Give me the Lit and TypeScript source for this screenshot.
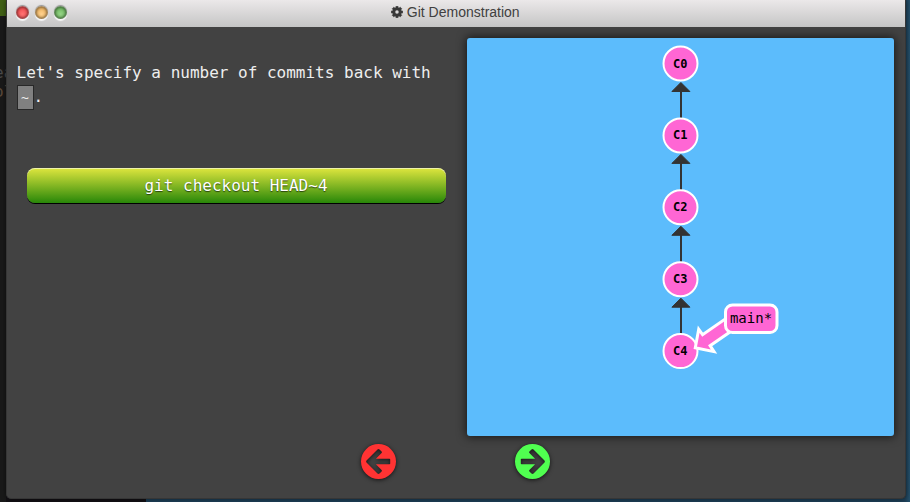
import { LitElement, html, css, svg } from "lit";
import { customElement } from "lit/decorators.js";

const COG =
  "M1152 896q0-106-75-181t-181-75-181 75-75 181 75 181 181 75 181-75 75-181zm512-109v222q0 12-8 23t-20 13l-185 28q-19 54-39 91 35 50 107 138 10 12 10 25t-9 23q-27 37-99 108t-94 71q-12 0-26-9l-138-108q-44 23-91 38-16 136-29 186-7 28-36 28h-222q-14 0-24.5-8.5t-11.5-21.5l-28-184q-49-16-90-37l-141 107q-10 9-25 9-14 0-25-11-126-114-165-168-7-10-7-23 0-12 8-23 15-21 51-66.5t54-70.5q-27-50-41-99l-183-27q-13-2-21-12.5t-8-23.5v-222q0-12 8-23t19-13l186-28q14-46 39-92-40-57-107-138-10-12-10-24 0-10 9-23 26-36 98.5-107.5t94.5-71.5q13 0 26 10l138 107q44-23 91-38 16-136 29-186 7-28 36-28h222q14 0 24.5 8.5t11.5 21.5l28 184q49 16 90 37l142-107q9-9 24-9 13 0 25 10 129 119 165 170 7 8 7 22 0 12-8 23-15 21-51 66.5t-54 70.5q26 50 41 98l183 28q13 2 21 12.5t8 23.5z";

@customElement("commit-graph")
class CommitGraph extends LitElement {
  static styles = css`
    :host {
      display: block;
      height: 398px;
      border-radius: 3px;
      background: #5cbcfc;
      box-shadow: 0 0 10px 1px rgba(0, 0, 0, 0.65);
    }
    svg {
      display: block;
    }
    .edge {
      stroke: #333;
      stroke-width: 2;
    }
    .head {
      fill: #333;
      stroke: #333;
      stroke-width: 1;
      stroke-linejoin: round;
    }
    .node {
      fill: #ff66d4;
      stroke: #fff;
      stroke-width: 2;
    }
    .tag {
      fill: #ff66d4;
      stroke: #fff;
      stroke-width: 3;
    }
    text {
      text-anchor: middle;
      fill: #000;
      font-family: "DejaVu Sans Mono", monospace;
    }
    .id {
      font-size: 12px;
      font-weight: bold;
    }
    .branch {
      font-size: 14px;
    }
  `;

  render() {
    const commits = ["C0", "C1", "C2", "C3", "C4"];
    const y = (i: number) => 25.5 + i * 71.9;
    return html`<svg width="427" height="398" viewBox="0 0 427 398">
      ${commits.slice(1).map(
        (_, i) => svg`
          <line class="edge" x1="214" x2="214" y1=${y(i) + 26} y2=${y(i + 1) - 17}></line>
          <path class="head" transform="translate(213.9 ${y(i) + 19})" d="M0 0L9 9H-9Z"></path>`
      )}
      ${commits.map(
        (id, i) => svg`
          <circle class="node" cx="213.5" cy=${y(i)} r="17"></circle>
          <text class="id" x="213.3" y=${y(i) + 4}>${id}</text>`
      )}
      <path class="tag" d="M228.3 309.8L231.7 291.2L235.6 296.7L265 276.3L272 287.8L243.1 307.7L247 313.6Z"></path>
      <rect class="tag" x="258.5" y="267" width="51.5" height="27.5" rx="7"></rect>
      <text class="branch" x="284" y="285">main*</text>
    </svg>`;
  }
}

@customElement("nav-arrow")
class NavArrow extends LitElement {
  static properties = { dir: { type: String } };
  declare dir: string;
  static styles = css`
    :host {
      display: block;
      width: 35px;
      height: 35px;
    }
    svg {
      display: block;
      overflow: visible;
      filter: drop-shadow(0 1px 2px rgba(0, 0, 0, 0.7));
    }
    .left {
      fill: #ff3333;
      transform: scaleX(-1);
    }
    .right {
      fill: #50ff50;
    }
  `;
  render() {
    return html`<svg width="35" height="35" viewBox="-17.5 -17.5 35 35">
      <path
        class=${this.dir}
        fill-rule="evenodd"
        d="M-17.5 0A17.5 17.5 0 1 1 17.5 0A17.5 17.5 0 1 1 -17.5 0ZM-11 -2.8Q-11.7 -2.8 -11.7 -2V2Q-11.7 2.8 -11 2.8H2.6L-3.1 8.5Q-3.8 9.2 -3.1 9.9L-1 12Q0 12.8 1 12L12 1Q12.8 0 12 -1L1 -12Q0 -12.8 -1 -12L-3.1 -9.9Q-3.8 -9.2 -3.1 -8.5L2.6 -2.8Z"
      ></path>
    </svg>`;
  }
}

@customElement("app-root")
class AppRoot extends LitElement {
  static styles = css`
    :host {
      display: block;
      position: relative;
      box-sizing: border-box;
      width: 910px;
      height: 502px;
      padding: 0 4px 3px 6px;
      overflow: hidden;
      font-family: "DejaVu Sans Mono", monospace;
      background:
        linear-gradient(#416016, #416016) 0 0 / 6px 16px no-repeat,
        linear-gradient(90deg, #191919 0 6px, #121014 6px 146px, #1d3e55 146px 905px, #24506b 910px);
    }
    .terminal {
      position: absolute;
      left: -6px;
      top: 63px;
      width: 13px;
      overflow: hidden;
      font-size: 16px;
      line-height: 19px;
      color: #4a4a4a;
      white-space: pre;
    }
    .hint {
      color: #5b4939;
    }
    .window {
      position: relative;
      display: flex;
      flex-direction: column;
      box-sizing: border-box;
      height: 499px;
      border: solid #363636;
      border-width: 0 1px 1px;
      border-radius: 0 0 5px 5px;
      background: #424242;
      box-shadow: 0 0 5px rgba(0, 0, 0, 0.5);
      overflow: hidden;
    }
    .bar {
      flex: none;
      display: grid;
      grid-template-columns: 1fr auto 1fr;
      align-items: center;
      height: 27px;
      margin: 0 -1px;
      padding: 0 2px 0 1px;
      box-sizing: border-box;
      border-left: 1px solid #668fad;
      border-right: 1px solid #7899ac;
      background: linear-gradient(#ebe8e9, #c5c5c5);
    }
    .lights {
      display: flex;
      gap: 6px;
      padding: 0 0 2px 8px;
    }
    .light {
      width: 13px;
      height: 13px;
      box-sizing: border-box;
      border-radius: 50%;
      border: 1px solid rgba(70, 70, 70, 0.45);
      box-shadow:
        0 2px 1px rgba(255, 255, 255, 0.85),
        0 -1px 1px rgba(0, 0, 0, 0.35),
        inset 0 0 3px rgba(0, 0, 0, 0.65);
    }
    .red {
      background: radial-gradient(circle at 50% 65%, #ff7373, #ee3f43);
    }
    .amber {
      background: radial-gradient(circle at 50% 65%, #ffd28e, #e9a951);
    }
    .green {
      background: radial-gradient(circle at 50% 65%, #96d587, #61ad51);
    }
    .title {
      display: flex;
      align-items: center;
      gap: 3.5px;
      padding-bottom: 3px;
      font: 14px/20px "Liberation Sans", Arial, sans-serif;
      color: #404040;
    }
    .title svg {
      fill: #383838;
      stroke: #383838;
      stroke-width: 60;
      margin-bottom: 1px;
    }
    .content {
      display: grid;
      grid-template-columns: 430px 427px;
      column-gap: 20px;
      padding: 11px 0 0 10px;
    }
    .lesson {
      padding-top: 23px;
    }
    p {
      margin: 0 0 58px -0.5px;
      font-size: 16px;
      line-height: 24px;
      color: #eee;
      white-space: nowrap;
    }
    code {
      display: inline-block;
      box-sizing: border-box;
      width: 17px;
      height: 25px;
      border: 1px solid #282828;
      background: #808080;
      font: 13px/23px "DejaVu Sans Mono", monospace;
      text-align: center;
      vertical-align: middle;
    }
    .command {
      display: block;
      width: 419px;
      height: 35px;
      margin: 0 0 0 10px;
      padding: 0 1px 0 0;
      border: 0;
      border-radius: 8px;
      background: linear-gradient(#dfe63e, #288709);
      box-shadow:
        0 1px 0 #000,
        inset 0 1px 0 rgba(255, 255, 255, 0.55);
      font: 16px/35px "DejaVu Sans Mono", monospace;
      color: #fff;
      text-shadow: 0 1px 1px rgba(0, 0, 0, 0.6);
    }
    .nav {
      display: flex;
      justify-content: center;
      gap: 119.3px;
      padding: 8px 1px 0 0;
    }
  `;

  render() {
    return html`
      <div class="terminal"><div>ea</div><div class="hint">ol</div></div>
      <div class="window">
        <div class="bar">
          <div class="lights">
            <div class="light red"></div>
            <div class="light amber"></div>
            <div class="light green"></div>
          </div>
          <div class="title">
            <svg width="12" height="12" viewBox="98 98 1596 1596"><path d=${COG}></path></svg>
            <span>Git Demonstration</span>
          </div>
        </div>
        <div class="content">
          <div class="lesson">
            <p>Let's specify a number of commits back with<br /><code>~</code>.</p>
            <button class="command">git checkout HEAD~4</button>
          </div>
          <commit-graph></commit-graph>
        </div>
        <div class="nav">
          <nav-arrow dir="left"></nav-arrow>
          <nav-arrow dir="right"></nav-arrow>
        </div>
      </div>
    `;
  }
}
